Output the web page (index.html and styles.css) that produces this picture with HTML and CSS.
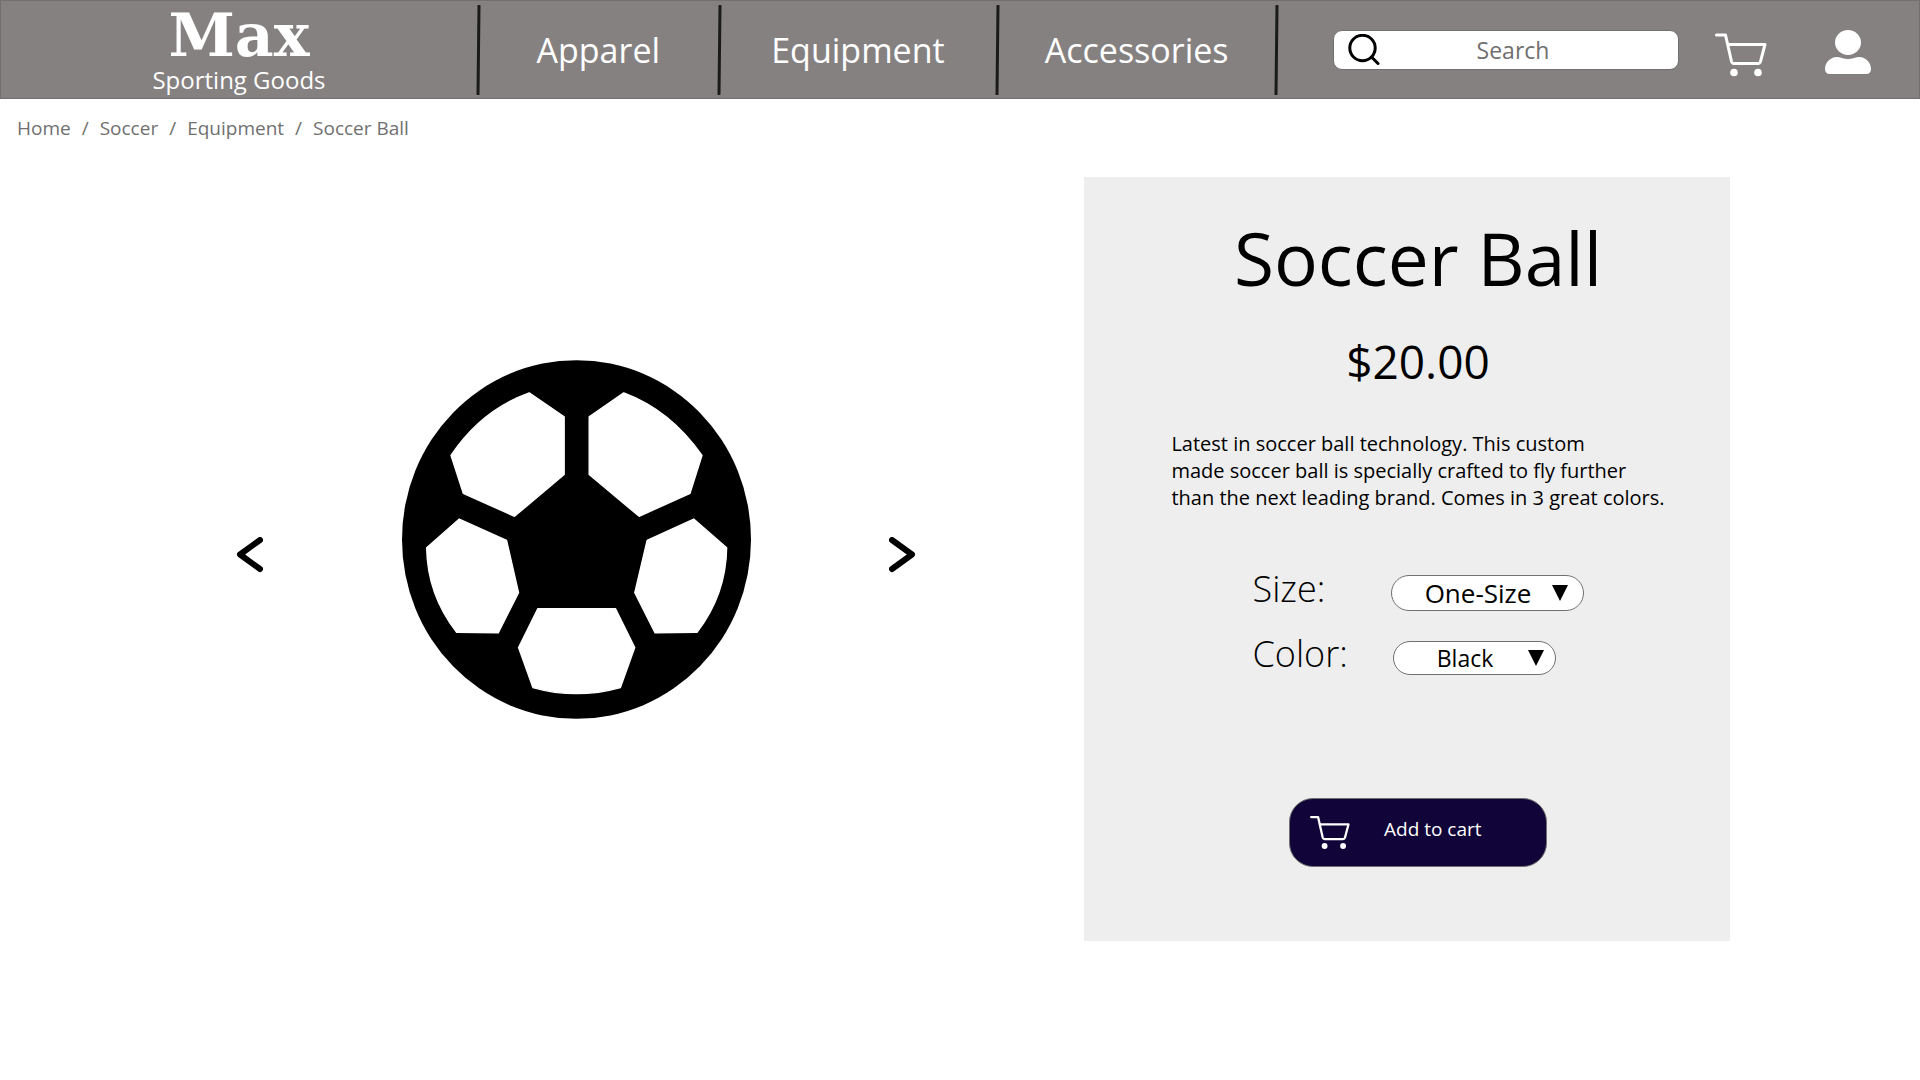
FILE: index.html
```html
<!DOCTYPE html>
<html lang="en">
<head>
<meta charset="utf-8">
<meta name="viewport" content="width=device-width, initial-scale=1">
<title>Soccer Ball | Max Sporting Goods</title>
<link rel="stylesheet" href="styles.css">
</head>
<body>
<svg class="sprite" aria-hidden="true">
  <symbol id="cart" viewBox="0 0 52 44">
    <path d="M1.500 2H10.500L16.500 28.500Q17 30.500 19 30.500H43Q45 30.500 45.500 28.500L50 11.500H13" fill="none" stroke="currentColor" stroke-width="3" stroke-linejoin="round" stroke-linecap="round"/>
    <circle cx="19" cy="39.500" r="3.800" fill="currentColor"/>
    <circle cx="43" cy="39.500" r="3.800" fill="currentColor"/>
  </symbol>
</svg>

<header class="header">
  <a class="logo" href="#">
    <span class="logo-name">Max</span>
    <span class="logo-tag">Sporting Goods</span>
  </a>
  <nav class="nav" aria-label="Main">
    <svg class="divider" viewBox="0 0 6 90" aria-hidden="true"><path d="M4 1L3 89"/></svg>
    <a href="#">Apparel</a>
    <svg class="divider" viewBox="0 0 6 90" aria-hidden="true"><path d="M4 1L3 89"/></svg>
    <a href="#">Equipment</a>
    <svg class="divider" viewBox="0 0 6 90" aria-hidden="true"><path d="M4 1L3 89"/></svg>
    <a href="#">Accessories</a>
    <svg class="divider" viewBox="0 0 6 90" aria-hidden="true"><path d="M4 1L3 89"/></svg>
  </nav>
  <div class="tools">
    <label class="search">
      <svg class="search-icon" viewBox="0 0 32 32" aria-hidden="true"><circle cx="14.500" cy="14" r="12.700"/><path d="M23.500 23L30 29.500"/></svg>
      <input type="search" placeholder="Search" aria-label="Search">
    </label>
    <a class="tool" href="#" aria-label="Cart"><svg class="cart-icon"><use href="#cart"/></svg></a>
    <a class="tool" href="#" aria-label="Account">
      <svg class="user-icon" viewBox="0 0 46 44"><ellipse cx="23" cy="12.500" rx="13" ry="12.500"/><path d="M12 27Q14 27 17 28Q23 30 29 28Q32 27 34 27C41 27 46 33 46 39Q46 44 41 44H5Q0 44 0 39C0 33 5 27 12 27Z"/></svg>
    </a>
  </div>
</header>

<nav class="breadcrumb" aria-label="Breadcrumb">
  <a href="#">Home</a><span>/</span><a href="#">Soccer</a><span>/</span><a href="#">Equipment</a><span>/</span><a href="#">Soccer Ball</a>
</nav>

<main class="product">
  <section class="gallery" aria-label="Product pictures">
    <button class="arrow" type="button" aria-label="Previous"><svg viewBox="0 0 27 36"><path d="M24 3L4 17.500L24 32"/></svg></button>
    <svg class="ball" viewBox="66 60 1048 1077" role="img" aria-label="Black soccer ball">
      <ellipse cx="590" cy="598.500" rx="524" ry="538.500"/>
      <g class="patches">
        <path d="M448 158L553 230V403L404 529L250 460L213 346Q304 210 448 158Z"/>
        <path d="M732 158L628 230V403L778 529L931 460L967 346Q872 210 732 158Z"/>
        <path d="M238 537L380 601L416 758L355 879L230 877Q142 764 140 623Z"/>
        <path d="M942 537L802 601L765 758L826 879L952 877Q1039 764 1041 623Z"/>
        <path d="M474 806H707L765 923L722 1043Q590 1080 459 1043L416 923Z"/>
      </g>
    </svg>
    <button class="arrow" type="button" aria-label="Next"><svg viewBox="0 0 27 36"><path d="M3 3L23 17.500L3 32"/></svg></button>
  </section>

  <section class="details">
    <h1>Soccer Ball</h1>
    <p class="price">$20.00</p>
    <p class="description">Latest in soccer ball technology. This custom<br>made soccer ball is specially crafted to fly further<br>than the next leading brand. Comes in 3 great colors.</p>
    <form class="options">
      <label for="size">Size:</label>
      <span class="select size">
        <select id="size"><option>One-Size</option></select>
        <svg viewBox="0 0 16 16" aria-hidden="true"><path d="M0 0H16L8 16Z"/></svg>
      </span>
      <label for="color">Color:</label>
      <span class="select color">
        <select id="color"><option>Black</option></select>
        <svg viewBox="0 0 16 16" aria-hidden="true"><path d="M0 0H16L8 16Z"/></svg>
      </span>
    </form>
    <button class="add" type="button"><svg><use href="#cart"/></svg><span>Add to cart</span></button>
  </section>
</main>
</body>
</html>
```
FILE: styles.css
```css
* { box-sizing: border-box; }

body {
  margin: 0;
  background: #fff;
  color: #000;
  font-family: "Open Sans", "Noto Sans", sans-serif;
  font-size: 19px;
}

a { color: inherit; text-decoration: none; }
h1, p { margin: 0; font-weight: 400; }
button, input, select { font: inherit; color: inherit; }
svg { display: block; }
.sprite { position: absolute; width: 0; height: 0; }

/* Header */
.header {
  display: grid;
  grid-template-columns: minmax(0, 474fr) minmax(0, 804fr) minmax(0, 640fr);
  align-items: center;
  height: 99px;
  border: 1px solid #707070;
  background: #858181;
  color: #fff;
}

.logo {
  display: flex;
  flex-direction: column;
  align-items: center;
  padding: 2px 0 0 2px;
}

.logo-name {
  font: 900 60px/58px "DejaVu Serif", serif;
}

.logo-tag { font-size: 24px; line-height: 32px; }

.nav {
  display: grid;
  grid-template-columns: 6px 234fr 6px 272fr 6px 272fr 6px;
  align-items: center;
  text-align: center;
  font-size: 34px;
  line-height: 44px;
}

.divider { width: 6px; height: 90px; }
.divider path { stroke: #1a1a1a; stroke-width: 3; stroke-linecap: round; }

.tools {
  display: flex;
  align-items: center;
  padding: 0 48px 0 54px;
}

.search {
  display: flex;
  align-items: center;
  flex: 1;
  min-width: 0;
  height: 40px;
  padding: 0 12px 0 14px;
  border: 1px solid #707070;
  border-radius: 9px;
  background: #fff;
  color: #707070;
}

.search-icon { flex: none; width: 32px; height: 32px; fill: none; stroke: #000; stroke-width: 3; stroke-linecap: round; }

.search input {
  flex: 1;
  min-width: 0;
  padding: 0;
  border: 0;
  outline: 0;
  background: none;
  font-size: 23px;
  text-align: center;
}

.search input::placeholder { color: #707070; opacity: 1; }
.tool { margin-left: 36px; }
.tool + .tool { margin-left: 58px; }
.cart-icon { width: 52px; height: 44px; margin-top: 10px; }
.user-icon { width: 46px; height: 44px; margin-top: 4px; fill: currentColor; }

/* Breadcrumb */
.breadcrumb {
  display: flex;
  gap: 11px;
  padding: 16px 17px;
  color: #707070;
  line-height: 26px;
}

/* Product */
.product {
  display: grid;
  grid-template-columns: 1084fr 646fr 190fr;
  padding: 20px 0 40px;
}

.gallery {
  display: flex;
  align-items: center;
  justify-content: space-between;
  padding: 0 168px 39px 236px;
}

.ball { width: 349px; height: 359px; }
.patches { fill: #fff; stroke: #fff; stroke-width: 4; stroke-linejoin: round; }

.arrow {
  padding: 0;
  margin-top: 30px;
  border: 0;
  background: none;
}

.arrow svg { width: 27px; height: 36px; fill: none; stroke: #000; stroke-width: 6; stroke-linecap: round; stroke-linejoin: round; }

.details {
  display: flex;
  flex-direction: column;
  align-items: center;
  padding: 31px 0 74px 22px;
  background: #eee;
}

h1 { font-size: 73px; line-height: 100px; }
.price { margin-top: 23px; font-size: 46px; line-height: 60px; }
.description { margin-top: 39px; font-size: 20px; line-height: 27px; }

.options {
  display: grid;
  grid-template-columns: 138px 193px;
  row-gap: 15px;
  align-items: center;
  margin-top: 53px;
  font-size: 36px;
  line-height: 50px;
  font-weight: 350;
}

.select { display: grid; align-items: center; padding-top: 8px; }
.select select, .select svg { grid-area: 1 / 1; }

.select select {
  width: 100%;
  height: 36px;
  padding: 0 50px 0 32px;
  border: 1px solid #707070;
  border-radius: 18px;
  background: #fff;
  appearance: none;
  font-size: 26px;
  line-height: 34px;
  font-weight: 400;
  text-align-last: center;
}

.select svg { justify-self: end; width: 16px; height: 16px; margin-right: 16px; pointer-events: none; }
.color { width: 165px; padding-left: 2px; }
.color select { height: 34px; font-size: 23px; line-height: 32px; }
.color svg { margin-right: 12px; }

.add {
  display: flex;
  align-items: center;
  gap: 34px;
  width: 258px;
  height: 69px;
  margin-top: 119px;
  padding: 0 20px;
  border: 1px solid #707070;
  border-radius: 24px;
  background: #110438;
  color: #fff;
}

.add svg { width: 40px; height: 37px; }
.add span { padding-bottom: 8px; }
```
